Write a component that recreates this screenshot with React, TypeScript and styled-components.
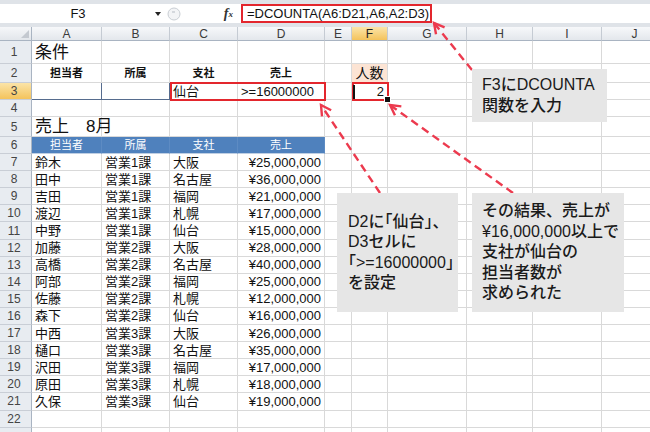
import React from 'react';
import styled, {createGlobalStyle, css} from 'styled-components';

const GlobalStyle = createGlobalStyle`
  html, body {
    margin: 0;
    padding: 0;
    background: #ffffff;
  }
  body {
    font-family: 'Liberation Sans', 'Noto Sans CJK JP', sans-serif;
    overflow: hidden;
  }
`;

const Page = styled.div`
  position: relative;
  width: 650px;
  height: 432px;
  overflow: hidden;
  background: #ffffff;
`;

// ---- formula bar ----
const FormulaBar = styled.div`
  display: flex;
  height: 27px;
  box-sizing: border-box;
  padding: 4px 0;
  background: #dfe3e8;
`;

const NameBox = styled.div`
  display: flex;
  align-items: center;
  width: 166px;
  background: #ffffff;
  font-size: 13px;
  color: #111;
`;

const NameText = styled.div`
  width: 156px;
  text-align: center;
`;

const DropArrow = styled.div`
  width: 0;
  height: 0;
  border-left: 3px solid transparent;
  border-right: 3px solid transparent;
  border-top: 4px solid #222;
  margin-left: -1px;
`;

const Grip = styled.div`
  display: flex;
  align-items: center;
  width: 22px;
  background: #ffffff;
`;

const FxBox = styled.div`
  display: flex;
  align-items: center;
  justify-content: flex-end;
  width: 53px;
  padding-right: 8px;
  box-sizing: border-box;
  background: #ffffff;
  font-family: 'Liberation Serif', serif;
  font-style: italic;
  font-weight: bold;
  font-size: 14px;
  color: #333;

  sub {
    font-size: 9px;
    vertical-align: -1px;
  }
`;

const FormulaField = styled.div`
  flex: 1;
  display: flex;
  background: #ffffff;
`;

const FormulaText = styled.div`
  display: flex;
  align-items: center;
  padding: 0 1px 0 4px;
  border: 2px solid #e3262d;
  font-size: 13px;
  color: #111;
  white-space: nowrap;
`;

// ---- sheet grid ----
const rowHeights = [23, 19, 17, 17, 20, ...Array(17).fill(17.1), 20];

const Sheet = styled.div`
  display: grid;
  grid-template-columns: 32px 70px 68px 68px 87px 27px 36px 79px 66px 69px 66px;
  grid-template-rows: 14px ${rowHeights.map(h => `${h}px`).join(' ')};
`;

const headGold = 'linear-gradient(#fbe4a8, #f4c35c)';

const Corner = styled.div`
  position: relative;
  background: linear-gradient(#f6f7f9, #e2e6eb);
  border-right: 1px solid #a9b4c2;
  border-bottom: 1px solid #a9b4c2;

  &::after {
    content: '';
    position: absolute;
    right: 2px;
    bottom: 2px;
    border-left: 8px solid transparent;
    border-bottom: 8px solid #c4c9d0;
  }
`;

const ColHead = styled.div<{$active?: boolean}>`
  display: flex;
  align-items: center;
  justify-content: center;
  font-size: 12px;
  color: ${p => (p.$active ? '#222' : '#3a3a3a')};
  background: ${p => (p.$active ? headGold : 'linear-gradient(#f7f8fa, #e3e7ec)')};
  border-right: 1px solid #c5cbd3;
  border-bottom: 1px solid #a9b4c2;
  box-sizing: border-box;
`;

const RowHead = styled.div<{$active?: boolean}>`
  display: flex;
  align-items: center;
  justify-content: center;
  padding-right: 3px;
  font-size: 12px;
  color: #444;
  background: ${p => (p.$active ? headGold : '#e8ecf1')};
  border-right: 1px solid #a9b4c2;
  border-bottom: 1px solid #c9ced6;
  box-sizing: border-box;
`;

type Tone = 'title' | 'label' | 'peach' | 'body' | 'band' | 'input';
type Align = 'left' | 'center' | 'right';
type CellSpec = {text?: string; tone?: Tone; align?: Align};

const toneStyles: Record<Tone, ReturnType<typeof css>> = {
  title: css`
    font-size: 17px;
  `,
  label: css`
    font-size: 11px;
    font-weight: bold;
  `,
  peach: css`
    font-size: 14px;
    background: #fce4d4;
  `,
  body: css``,
  band: css`
    font-size: 11px;
    color: #ffffff;
    background: #4f81bd;
    border-right-color: #5d8bc3;
    border-bottom-color: #bfcfe3;
  `,
  input: css`
    border-right-color: #566c8e;
    border-bottom-color: #566c8e;
  `,
};

const Cell = styled.div<{$tone: Tone; $align: Align}>`
  display: flex;
  align-items: center;
  justify-content: ${p =>
    p.$align === 'center' ? 'center' : p.$align === 'right' ? 'flex-end' : 'flex-start'};
  min-width: 0;
  padding: 0 3px;
  box-sizing: border-box;
  border-right: 1px solid #d9d9d9;
  border-bottom: 1px solid #d9d9d9;
  white-space: nowrap;
  font-size: 13px;
  line-height: 1;
  color: #111;
  ${p => toneStyles[p.$tone]}
`;

// ---- overlays ----
const Highlight = styled.div<{$x: number; $y: number; $w: number; $h: number}>`
  position: absolute;
  left: ${p => p.$x}px;
  top: ${p => p.$y}px;
  width: ${p => p.$w}px;
  height: ${p => p.$h}px;
  box-sizing: border-box;
  border: 2px solid #e3262d;
  pointer-events: none;
`;

const CursorBar = styled.div`
  position: absolute;
  left: 353px;
  top: 85px;
  width: 2px;
  height: 14px;
  background: #111;
`;

const FillHandle = styled.div`
  position: absolute;
  left: 384px;
  top: 96px;
  width: 5px;
  height: 5px;
  background: #111;
  border: 1px solid #ffffff;
`;

const Callout = styled.div<{$x: number; $y: number; $w: number; $h: number; $pad: number}>`
  position: absolute;
  left: ${p => p.$x}px;
  top: ${p => p.$y}px;
  width: ${p => p.$w}px;
  height: ${p => p.$h}px;
  box-sizing: border-box;
  display: flex;
  align-items: center;
  padding-left: ${p => p.$pad}px;
  background: #e6e6e6;
  font-size: 16px;
  font-weight: 500;
  line-height: 20.5px;
  color: #1a1a1a;
  white-space: nowrap;
`;

const Narrow = styled.span`
  font-feature-settings: 'halt';
`;

const ArrowLayer = styled.svg`
  position: absolute;
  left: 0;
  top: 0;
  pointer-events: none;
`;

type Pt = [number, number];
const arrows: {from: Pt; to: Pt}[] = [
  {from: [472, 70], to: [434, 23]},
  {from: [380, 193], to: [321, 105]},
  {from: [513, 193], to: [390, 105]},
];

function headPath(from: Pt, to: Pt) {
  const dx = to[0] - from[0];
  const dy = to[1] - from[1];
  const len = Math.hypot(dx, dy);
  const ux = dx / len;
  const uy = dy / len;
  const size = 10;
  const bx = to[0] - ux * size;
  const by = to[1] - uy * size;
  const px = -uy * size * 0.55;
  const py = ux * size * 0.55;
  return `M${bx + px} ${by + py} L${to[0]} ${to[1]} L${bx - px} ${by - py}`;
}

// ---- data ----
const people = [
  ['鈴木', '営業1課', '大阪', '¥25,000,000'],
  ['田中', '営業1課', '名古屋', '¥36,000,000'],
  ['吉田', '営業1課', '福岡', '¥21,000,000'],
  ['渡辺', '営業1課', '札幌', '¥17,000,000'],
  ['中野', '営業1課', '仙台', '¥15,000,000'],
  ['加藤', '営業2課', '大阪', '¥28,000,000'],
  ['高橋', '営業2課', '名古屋', '¥40,000,000'],
  ['阿部', '営業2課', '福岡', '¥25,000,000'],
  ['佐藤', '営業2課', '札幌', '¥12,000,000'],
  ['森下', '営業2課', '仙台', '¥16,000,000'],
  ['中西', '営業3課', '大阪', '¥26,000,000'],
  ['樋口', '営業3課', '名古屋', '¥35,000,000'],
  ['沢田', '営業3課', '福岡', '¥17,000,000'],
  ['原田', '営業3課', '札幌', '¥18,000,000'],
  ['久保', '営業3課', '仙台', '¥19,000,000'],
];

const t = (text: string, tone: Tone = 'body', align: Align = 'left'): CellSpec => ({
  text,
  tone,
  align,
});

const sheet: Record<number, (CellSpec | undefined)[]> = {
  1: [t('条件', 'title')],
  2: [
    t('担当者', 'label', 'center'),
    t('所属', 'label', 'center'),
    t('支社', 'label', 'center'),
    t('売上', 'label', 'center'),
    undefined,
    t('人数', 'peach', 'center'),
  ],
  3: [{tone: 'input'}, {tone: 'input'}, t('仙台'), t('>=16000000'), undefined, t('2', 'body', 'right')],
  5: [t('売上\u30008月', 'title')],
  6: ['担当者', '所属', '支社', '売上'].map(s => t(s, 'band', 'center')),
};
people.forEach((p, i) => {
  sheet[7 + i] = [t(p[0]), t(p[1]), t(p[2]), t(p[3], 'body', 'right')];
});

const cols = ['A', 'B', 'C', 'D', 'E', 'F', 'G', 'H', 'I', 'J'];

export default function App() {
  return (
    <>
      <GlobalStyle />
      <Page>
        <FormulaBar>
          <NameBox>
            <NameText>F3</NameText>
            <DropArrow />
          </NameBox>
          <Grip>
            <svg width="16" height="16" viewBox="0 0 16 16">
              <circle cx="8" cy="8" r="6" fill="#f3f4f6" stroke="#c9ced4" strokeWidth="1" />
              <line x1="6" y1="6" x2="9" y2="6" stroke="#b5bbc3" strokeWidth="1" />
            </svg>
          </Grip>
          <FxBox>
            f<sub>x</sub>
          </FxBox>
          <FormulaField>
            <FormulaText>=DCOUNTA(A6:D21,A6,A2:D3)</FormulaText>
          </FormulaField>
        </FormulaBar>

        <Sheet>
          <Corner />
          {cols.map(c => (
            <ColHead key={c} $active={c === 'F'}>
              {c}
            </ColHead>
          ))}
          {rowHeights.map((_, i) => {
            const r = i + 1;
            const specs = sheet[r] ?? [];
            // the last row is only a sliver at the window's bottom edge
            const last = r === rowHeights.length;
            return (
              <React.Fragment key={r}>
                <RowHead $active={r === 3}>{last ? null : r}</RowHead>
                {cols.map((c, ci) => {
                  const s = specs[ci];
                  return (
                    <Cell key={c} $tone={s?.tone ?? 'body'} $align={s?.align ?? 'left'}>
                      {s?.text}
                    </Cell>
                  );
                })}
              </React.Fragment>
            );
          })}
        </Sheet>

        <Highlight $x={170} $y={82} $w={156} $h={19} />
        <Highlight $x={352} $y={82} $w={37} $h={19} />
        <CursorBar />
        <FillHandle />

        <ArrowLayer width="650" height="432">
          {arrows.map((a, i) => (
            <g key={i} stroke="#ec3a4e" strokeWidth="2.4" fill="none" strokeLinecap="butt">
              <line
                x1={a.from[0]}
                y1={a.from[1]}
                x2={a.to[0]}
                y2={a.to[1]}
                strokeDasharray="8 5"
              />
              <path d={headPath(a.from, a.to)} />
            </g>
          ))}
        </ArrowLayer>

        <Callout $x={472} $y={69} $w={135} $h={53} $pad={10}>
          <div>
            F3にDCOUNTA
            <br />
            関数を入力
          </div>
        </Callout>
        <Callout $x={337} $y={193} $w={121} $h={119} $pad={11}>
          <div>
            D2に<Narrow>「</Narrow>仙台<Narrow>」、</Narrow>
            <br />
            D3セルに
            <br />
            <Narrow>「</Narrow>&gt;=16000000<Narrow>」</Narrow>
            <br />
            を設定
          </div>
        </Callout>
        <Callout $x={472} $y={193} $w={152} $h={119} $pad={10}>
          <div>
            その結果、売上が
            <br />
            ¥16,000,000以上で
            <br />
            支社が仙台の
            <br />
            担当者数が
            <br />
            求められた
          </div>
        </Callout>
      </Page>
    </>
  );
}
